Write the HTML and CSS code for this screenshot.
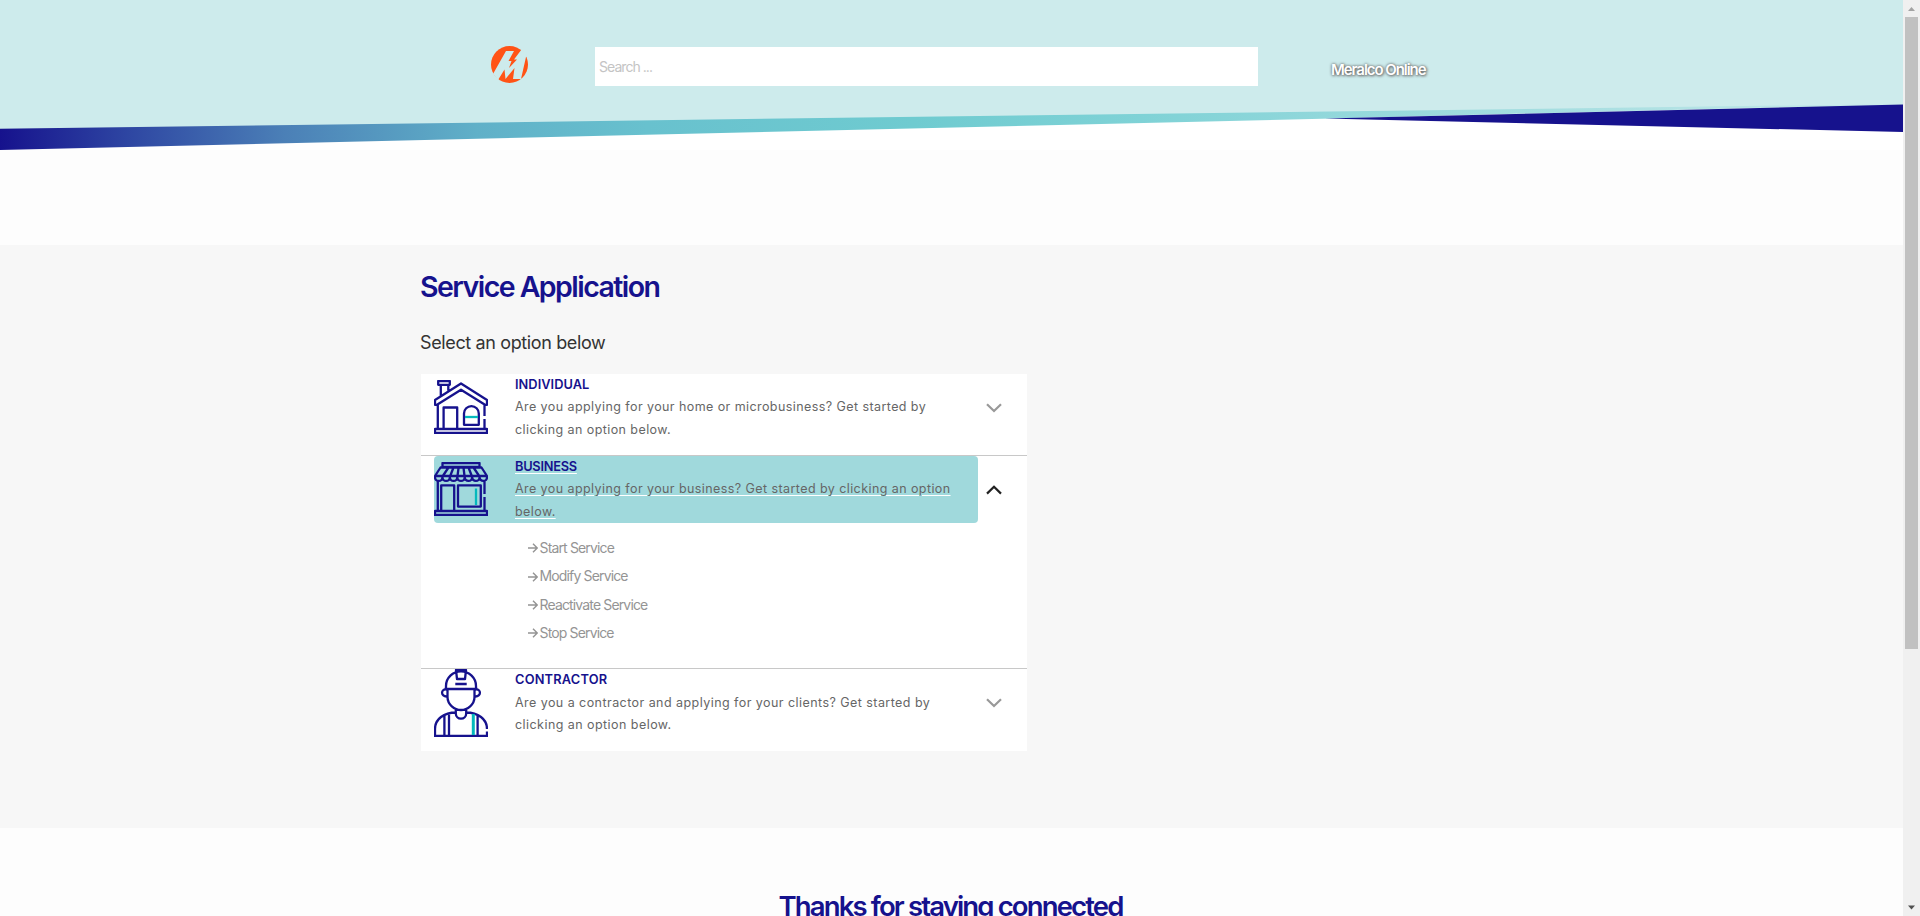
FILE: index.html
```
<!DOCTYPE html>
<html lang="en">
<head>
<meta charset="utf-8">
<title>Service Application</title>
<link rel="stylesheet" href="styles.css">
</head>
<body>
<div class="page">
  <header class="header">
    <svg class="header-art" viewBox="0 0 1903 150" preserveAspectRatio="none">
      <defs>
        <linearGradient id="band" x1="0" x2="1903" y1="0" y2="0" gradientUnits="userSpaceOnUse">
          <stop offset="0" stop-color="#16128d"/>
          <stop offset=".07" stop-color="#2f48a3"/>
          <stop offset=".15" stop-color="#4b80b7"/>
          <stop offset=".25" stop-color="#60b0c8"/>
          <stop offset=".34" stop-color="#68c1ce"/>
          <stop offset=".48" stop-color="#6fcbd0"/>
          <stop offset=".6" stop-color="#7fd2d6"/>
          <stop offset=".75" stop-color="#9bdadd"/>
          <stop offset="1" stop-color="#c6e9ea"/>
        </linearGradient>
      </defs>
      <path fill="#cdebec" d="M0 0H1903V106L0 130Z"/>
      <path fill="url(#band)" d="M0 128.8L1903 104L1333 118.5L0 150Z"/>
      <path fill="#16128d" d="M1325 118.5L1903 104.6V132Z"/>
    </svg>
    <div class="header-row">
      <svg class="logo" viewBox="0 0 37 37">
        <circle cx="18.5" cy="18.5" r="18.5" fill="#ff5316"/>
        <path fill="#cdebec" d="M2 28L15 5H23L17.5 15H20.5L18 22L26 13.5H23L30.5 3.5L36.5 9.5L35 11L30 33H22L23.5 22L14.5 33L13.5 23.5L7 34Z"/>
      </svg>
      <div class="search">Search ...</div>
      <a class="online">Meralco Online</a>
    </div>
  </header>

  <main class="main">
    <h1 class="title">Service Application</h1>
    <h2 class="subtitle">Select an option below</h2>
    <div class="panel">
      <section class="item">
        <div class="item-row">
          <svg class="icon" viewBox="0 0 54 54">
            <path d="M4.2 1H15.8V4.8H4.2ZM6.8 5V15.5M14.3 5V10.5M1 20L27 3.5L53 20V24.8H51L27 9.7L3 24.8H1ZM3.8 25V49M50.5 25V36M50.5 39V49M1 49H53V53H1ZM9.6 49V27.5H23.2V49M30 44.8V33.5a7.4 7.4 0 0 1 14.8 0V44.8Z"/>
            <path class="teal" d="M31 37H44"/>
          </svg>
          <div class="copy">
            <h3 class="name name-individual">INDIVIDUAL</h3>
            <p class="desc">Are you applying for your home or microbusiness? Get started by<br>clicking an option below.</p>
          </div>
        </div>
        <svg class="chevron" viewBox="0 0 16 10"><path d="M1 1.2L8 8L15 1.2"/></svg>
      </section>

      <section class="item item-open">
        <div class="item-row active">
          <svg class="icon" viewBox="0 0 54 54">
            <path d="M8.5 1H45.5V5H8.5ZM6.5 5.5H47.5L53 14H1ZM14.5 5.5L8.8 14M19.5 5.5L16.2 14M24.6 5.5L23.5 14M29.5 5.5L30.5 14M34.5 5.5L37.8 14M39.5 5.5L45.2 14M1 14V15.2a3.7 3.7 0 0 0 7.43 0V14V15.2a3.7 3.7 0 0 0 7.43 0V14V15.2a3.7 3.7 0 0 0 7.43 0V14V15.2a3.7 3.7 0 0 0 7.43 0V14V15.2a3.7 3.7 0 0 0 7.43 0V14V15.2a3.7 3.7 0 0 0 7.43 0V14V15.2a3.7 3.7 0 0 0 7.43 0V14M3.8 19V49M50.5 19V32M50.5 35V49M1 49H53V53H1ZM7.2 49V23.4H20.2V49M24 23.4H46.8V44.6H24Z"/>
            <path class="teal" d="M42 26.5V43"/>
          </svg>
          <div class="copy">
            <h3 class="name name-business">BUSINESS</h3>
            <p class="desc">Are you applying for your business? Get started by clicking an option<br>below.</p>
          </div>
        </div>
        <svg class="chevron open" viewBox="0 0 16 10"><path d="M1 8.6L8 1.8L15 8.6"/></svg>
        <ul class="links">
          <li><svg class="arrow" viewBox="0 0 10 10"><path d="M0 5H9M5 .8L9.2 5L5 9.2"/></svg>Start Service</li>
          <li><svg class="arrow" viewBox="0 0 10 10"><path d="M0 5H9M5 .8L9.2 5L5 9.2"/></svg>Modify Service</li>
          <li><svg class="arrow" viewBox="0 0 10 10"><path d="M0 5H9M5 .8L9.2 5L5 9.2"/></svg>Reactivate Service</li>
          <li><svg class="arrow" viewBox="0 0 10 10"><path d="M0 5H9M5 .8L9.2 5L5 9.2"/></svg>Stop Service</li>
        </ul>
      </section>

      <section class="item item-last">
        <div class="item-row">
          <svg class="icon icon-tall" viewBox="0 0 54 68">
            <path d="M12 19.5V17a15 14.6 0 0 1 30 0V19.5M22 1H32L31 10H23ZM21.3 15H32.7M10.5 20H43.5M12.5 20.5C6.5 19.5 6.5 28 13 27.5M41.5 20.5C47.5 19.5 47.5 28 41 27.5M13.5 20.5V28C13.5 35.5 20.5 41 27 41S40.5 35.5 40.5 28V20.5M21.8 40V44.5a5.2 5.2 0 0 0 10.4 0V40M22 43.5C10 43.5 1 50 1 60V67H53V62.5M32 43.5C44 43.5 53 50 53 60M10.4 47V67M15 45V67M43.6 47V67"/>
            <path class="teal strap" d="M39.3 45V66"/>
          </svg>
          <div class="copy">
            <h3 class="name name-contractor">CONTRACTOR</h3>
            <p class="desc">Are you a contractor and applying for your clients? Get started by<br>clicking an option below.</p>
          </div>
        </div>
        <svg class="chevron" viewBox="0 0 16 10"><path d="M1 1.2L8 8L15 1.2"/></svg>
      </section>
    </div>
  </main>

  <footer class="footer"><h2 class="thanks">Thanks for staying connected</h2></footer>
</div>
<div class="scrollbar">
  <svg class="sb-arrow" viewBox="0 0 17 17"><path fill="#a3a3a3" d="M5 11L8.5 7L12 11Z"/></svg>
  <div class="thumb"></div>
  <svg class="sb-arrow sb-down" viewBox="0 0 17 17"><path fill="#505050" d="M5 6.5L8.5 10.5L12 6.5Z"/></svg>
</div>
</body>
</html>
```
FILE: styles.css
```
* { box-sizing: border-box; margin: 0; padding: 0; }
body { display: flex; height: 916px; overflow: hidden; font-family: Inter, "Liberation Sans", sans-serif; background: #fdfdfd; }
svg { display: block; flex: none; }
.page { width: 1903px; height: 916px; overflow: hidden; }

.header { position: relative; height: 150px; background: #fff; }
.header-art { position: absolute; inset: 0; width: 1903px; height: 150px; }
.header-row { position: relative; display: flex; align-items: flex-start; padding: 46px 0 0 491px; }
.logo { width: 37px; height: 37px; }
.search { width: 663px; height: 39px; margin: 1px 0 0 67px; padding-left: 4px; background: #fff; color: #c4c4c4; font-size: 14px; line-height: 40px; letter-spacing: -.95px; }
.online { margin: 14px 0 0 73px; color: #fff; font-size: 15px; font-weight: 600; line-height: 20px; letter-spacing: -1.06px; text-shadow: 0 0 3px #555, 1px 1px 3px #777; }

.main { height: 583px; margin-top: 95px; padding: 22px 0 0 420px; background: #f7f7f7; }
.title { color: #16128d; font-size: 28.5px; font-weight: 600; line-height: 40px; letter-spacing: -1.54px; }
.subtitle { margin-top: 24px; color: #333; font-size: 18px; font-weight: 400; line-height: 24px; letter-spacing: -.37px; }
.panel { width: 606px; margin: 19px 0 0 1px; background: #fff; }
.item { display: grid; grid-template-columns: 544px 1fr; align-content: start; height: 82px; padding-left: 13px; border-bottom: 1px solid #c8c8c8; }
.item-open { height: 213px; }
.item-last { border-bottom: 0; }
.item-row { display: flex; align-items: flex-start; height: 67px; border-radius: 4px; }
.active { background: #a0d9dc; }
.icon { width: 54px; height: 54px; margin-top: 6px; fill: none; stroke: #16128d; stroke-width: 2.3; stroke-linejoin: round; }
.icon-tall { height: 68px; margin-top: 0; }
.icon .teal { stroke: #05b9bd; }
.icon .strap { stroke-width: 3; }
.copy { padding-left: 27px; white-space: nowrap; }
.name { color: #16128d; font-size: 12.8px; font-weight: 600; line-height: 22px; }
.name-individual { letter-spacing: .05px; }
.name-contractor { letter-spacing: .2px; }
.name-business { letter-spacing: -.25px; }
.desc { color: #666; font-size: 12.5px; line-height: 23px; letter-spacing: .42px; margin-top: -1px; }
.active .name, .active .desc { text-decoration: underline #fff 1px; text-underline-offset: 2px; }
.item-last .desc { line-height: 22px; margin-top: 1px; letter-spacing: .445px; }
.chevron { width: 16px; height: 10px; margin: 28.5px 0 0 8px; fill: none; stroke: #999; stroke-width: 2.2; }
.chevron.open { stroke: #222; }
.links { grid-column: 1 / -1; list-style: none; padding: 11px 0 0 93.5px; color: #949494; font-size: 14px; line-height: 28.4px; letter-spacing: -.85px; }
.links li { display: flex; align-items: center; gap: 2px; }
.arrow { width: 10px; height: 10px; fill: none; stroke: #949494; stroke-width: 1.4; }

.footer { padding: 58px 2px 0 0; text-align: center; }
.thanks { color: #16128d; font-size: 27.5px; font-weight: 600; line-height: 40px; letter-spacing: -1.86px; }

.scrollbar { display: flex; flex-direction: column; align-items: center; width: 17px; height: 916px; background: #f0f0f0; }
.sb-arrow { width: 17px; height: 17px; }
.thumb { width: 13px; height: 632px; background: #c1c1c1; }
.sb-down { margin-top: auto; }
```
